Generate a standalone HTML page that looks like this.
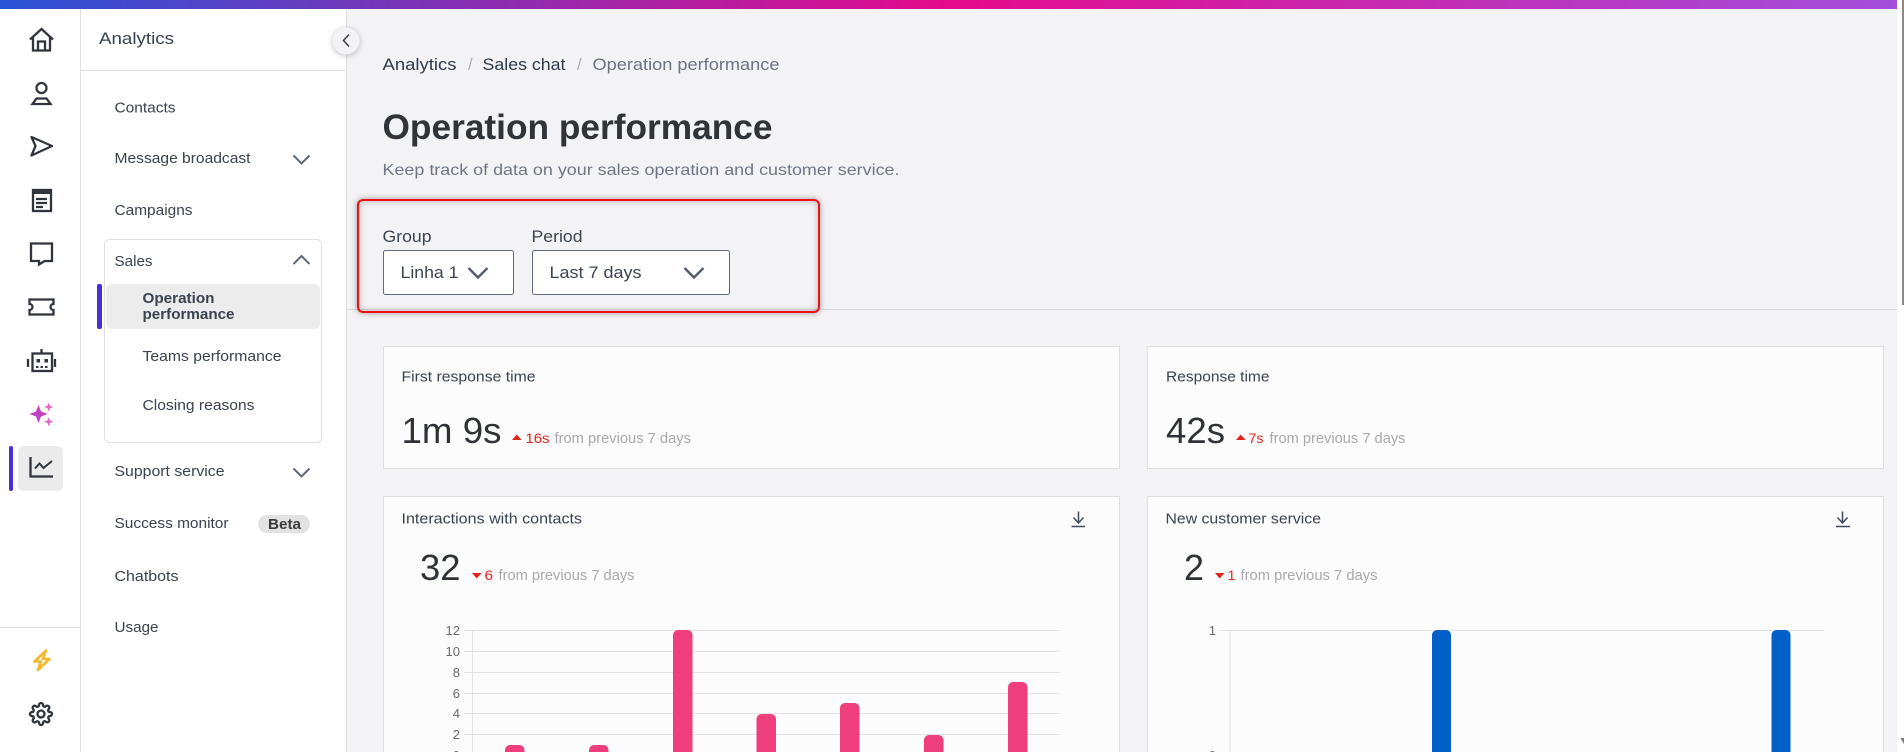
<!DOCTYPE html>
<html lang="en">
<head>
<meta charset="utf-8">
<title>Operation performance</title>
<style>
html,body{margin:0;padding:0;width:1904px;height:752px;overflow:hidden;background:#f3f3f5}
svg{position:absolute;left:0;top:0;display:block}
text{font-family:"Liberation Sans",sans-serif;fill:#3a4250}
.nav{font-size:15px}
.crumb{font-size:16.5px}
.title{font-size:15px;fill:#3a4250}
.big{font-size:36px;fill:#2f3236}
.delta{font-size:14px;fill:#e0241a}
.from{font-size:14.5px;fill:#a9a9a9}
.axis{font-size:13px;fill:#6b6b6b;text-anchor:end}
.ic{fill:none;stroke:#30343c;stroke-width:2.300}
.ch{fill:none;stroke:#5f6878;stroke-width:2}
#redbox{position:absolute;left:357px;top:199px;width:459px;height:110px;border:2px solid #f10f14;border-radius:6px;box-shadow:0 0 6px rgba(60,60,60,.5),inset 0 0 7px rgba(60,60,60,.35)}
</style>
</head>
<body>
<svg width="1904" height="752" viewBox="0 0 1904 752" xmlns="http://www.w3.org/2000/svg">
<defs>
<linearGradient id="g" x1="0" y1="0" x2="1897" y2="0" gradientUnits="userSpaceOnUse">
<stop offset="0" stop-color="#2953d8"/>
<stop offset=".5" stop-color="#e60a8c"/>
<stop offset="1" stop-color="#a14fdc"/>
</linearGradient>
</defs>

<!-- shell -->
<rect x="1897" y="0" width="7" height="752" fill="#fdfdfd"/>
<rect x="1902" y="0" width="2" height="305" fill="#8a8a8a"/>
<path d="M1900.500 738h3.500v6z" fill="#777"/>
<rect x="0" y="9" width="346" height="743" fill="#fff"/>
<rect x="80" y="9" width="1" height="743" fill="#dedfe3"/>
<rect x="346" y="9" width="1" height="743" fill="#dedfe3"/>
<rect x="81" y="70" width="265" height="1" fill="#dedfe3"/>
<rect x="0" y="627" width="80" height="1" fill="#dedfe3"/>
<rect x="347" y="309" width="1550" height="1" fill="#dcdcde"/>
<rect x="0" y="0" width="1897" height="9" fill="url(#g)"/>

<!-- rail icons -->
<g class="ic">
<path d="M30 39.500 41.500 29 53 39.500M33 37v13.500h17V37M38 50.500v-9h7v9"/>
<circle cx="41.500" cy="88" r="5"/>
<path d="M36.500 98.500h10l4 5.500h-18z"/>
<path d="M31.500 137 52 146 31.500 155.500 35.500 146z" stroke-linejoin="round"/>
<rect x="33" y="190" width="18" height="21"/>
<path d="M36 199h11M36 203h11M36 207h7"/>
<path d="M31 243.500H52V261H44.500L39 264.500V261H31z"/>
<path d="M29.500 299.500H53.500V304a3 3 0 0 0 0 6v4.500H29.500V310a3 3 0 0 0 0-6z"/>
<rect x="32.500" y="353.500" width="19.500" height="17.500"/>
<path d="M41.500 349v4.500M28 359v8M55 359v8"/>
<circle cx="41" cy="714" r="3.500"/>
<path transform="translate(29 702)" d="M19.400 15a1.650 1.650 0 0 0 .33 1.820l.06.06a2 2 0 0 1 0 2.830 2 2 0 0 1-2.830 0l-.06-.06a1.650 1.650 0 0 0-1.820-.33 1.650 1.650 0 0 0-1 1.510V21a2 2 0 0 1-2 2 2 2 0 0 1-2-2v-.09A1.650 1.650 0 0 0 9 19.400a1.650 1.650 0 0 0-1.820.33l-.06.06a2 2 0 0 1-2.830 0 2 2 0 0 1 0-2.830l.06-.06a1.650 1.650 0 0 0 .33-1.820 1.650 1.650 0 0 0-1.510-1H3a2 2 0 0 1-2-2 2 2 0 0 1 2-2h.09A1.650 1.650 0 0 0 4.600 9a1.650 1.650 0 0 0-.33-1.820l-.06-.06a2 2 0 0 1 0-2.830 2 2 0 0 1 2.830 0l.06.06a1.650 1.650 0 0 0 1.820.33H9a1.650 1.650 0 0 0 1-1.510V3a2 2 0 0 1 2-2 2 2 0 0 1 2 2v.09a1.650 1.650 0 0 0 1 1.510 1.650 1.650 0 0 0 1.820-.33l.06-.06a2 2 0 0 1 2.830 0 2 2 0 0 1 0 2.830l-.06.06a1.650 1.650 0 0 0-.33 1.820V9a1.650 1.650 0 0 0 1.510 1H21a2 2 0 0 1 2 2 2 2 0 0 1-2 2h-.09a1.650 1.650 0 0 0-1.510 1z"/>
</g>
<rect x="32" y="189" width="20" height="5" fill="#30343c"/>
<g fill="#30343c">
<rect x="36.500" y="359" width="3.500" height="3.500"/>
<rect x="44.500" y="359" width="3.500" height="3.500"/>
<rect x="36" y="366" width="2.500" height="2"/>
<rect x="40.500" y="366" width="2.500" height="2"/>
<rect x="45" y="366" width="2.500" height="2"/>
</g>
<path d="M38.500 405 41 411.500 47.500 414 41 416.500 38.500 423 36 416.500 29.500 414 36 411.500z" fill="#c23fc6"/>
<path d="M48.700 402.500 50 405.700 53.200 407 50 408.300 48.700 411.500 47.400 408.300 44.200 407 47.400 405.700z" fill="#e765bf"/>
<path d="M48.700 417.200 50 420.400 53.200 421.700 50 423 48.700 426.200 47.400 423 44.200 421.700 47.400 420.400z" fill="#e765bf"/>
<rect x="18" y="446" width="45" height="45" rx="6" fill="#ebebeb"/>
<path class="ic" d="M30.500 457v19.500H53"/>
<path class="ic" d="M35 468.500 39.500 463.500 43.500 468 52 461" style="stroke-width:2"/>
<rect x="9" y="446" width="4" height="45" rx="2" fill="#4a2de0"/>
<path d="M46 650.500 34.500 661.500H41L37.800 670 49.500 659H43z" fill="none" stroke="#f4b82e" stroke-width="2.600" stroke-linejoin="round"/>

<!-- sidebar -->
<text x="99" y="44" font-size="17" textLength="75" lengthAdjust="spacingAndGlyphs">Analytics</text>
<circle cx="346" cy="41" r="13.500" fill="#f3f3f5" style="filter:drop-shadow(0 1px 3px rgba(0,0,0,.25))"/>
<path d="M349 34.500 343.500 40.500 349 46.500" fill="none" stroke="#404652" stroke-width="1.600"/>

<text class="nav" x="114.500" y="112.500" textLength="61" lengthAdjust="spacingAndGlyphs">Contacts</text>
<text class="nav" x="114.500" y="163" textLength="136" lengthAdjust="spacingAndGlyphs">Message broadcast</text>
<path class="ch" d="M293.500 155.500 301.500 163.500 309.500 155.500"/>
<text class="nav" x="114.500" y="215" textLength="78" lengthAdjust="spacingAndGlyphs">Campaigns</text>

<rect x="104.500" y="239.500" width="217" height="203" rx="5" fill="#fff" stroke="#dfe0e4"/>
<text class="nav" x="114.500" y="266" textLength="38" lengthAdjust="spacingAndGlyphs">Sales</text>
<path class="ch" d="M293.500 264 301.500 256 309.500 264"/>
<rect x="106" y="284" width="214" height="45" rx="6" fill="#ececec"/>
<rect x="97" y="284" width="5" height="45" rx="2" fill="#4a2de0"/>
<text class="nav" x="142.500" y="303" font-weight="700" textLength="72" lengthAdjust="spacingAndGlyphs">Operation</text>
<text class="nav" x="142.500" y="319" font-weight="700" textLength="92" lengthAdjust="spacingAndGlyphs">performance</text>
<text class="nav" x="142.500" y="361" textLength="139" lengthAdjust="spacingAndGlyphs">Teams performance</text>
<text class="nav" x="142.500" y="410" textLength="112" lengthAdjust="spacingAndGlyphs">Closing reasons</text>

<text class="nav" x="114.500" y="476" textLength="110" lengthAdjust="spacingAndGlyphs">Support service</text>
<path class="ch" d="M293.500 468.500 301.500 476.500 309.500 468.500"/>
<text class="nav" x="114.500" y="528" textLength="114" lengthAdjust="spacingAndGlyphs">Success monitor</text>
<rect x="258" y="515" width="52" height="18" rx="9" fill="#e2e2e2"/>
<text x="268" y="529" font-size="15" font-weight="700" textLength="33" lengthAdjust="spacingAndGlyphs" style="fill:#3a3a3a">Beta</text>
<text class="nav" x="114.500" y="581" textLength="64" lengthAdjust="spacingAndGlyphs">Chatbots</text>
<text class="nav" x="114.500" y="632" textLength="44" lengthAdjust="spacingAndGlyphs">Usage</text>

<!-- header -->
<text class="crumb" x="382.500" y="70" textLength="74" lengthAdjust="spacingAndGlyphs" style="fill:#2f3a4a">Analytics</text>
<text class="crumb" x="468" y="70" style="fill:#a8adb8">/</text>
<text class="crumb" x="482.500" y="70" textLength="83" lengthAdjust="spacingAndGlyphs" style="fill:#2f3a4a">Sales chat</text>
<text class="crumb" x="577" y="70" style="fill:#a8adb8">/</text>
<text class="crumb" x="592.500" y="70" textLength="187" lengthAdjust="spacingAndGlyphs" style="fill:#6b7280">Operation performance</text>
<text x="382.500" y="139" font-size="35" font-weight="700" textLength="390" lengthAdjust="spacingAndGlyphs" style="fill:#303338">Operation performance</text>
<text x="382.500" y="175" font-size="16" textLength="517" lengthAdjust="spacingAndGlyphs" style="fill:#6f7683">Keep track of data on your sales operation and customer service.</text>

<!-- filters -->
<text x="382.500" y="242" font-size="17" textLength="49" lengthAdjust="spacingAndGlyphs" style="fill:#3d4450">Group</text>
<text x="531.500" y="242" font-size="17" textLength="51" lengthAdjust="spacingAndGlyphs" style="fill:#3d4450">Period</text>
<rect x="383.500" y="250.500" width="130" height="44" rx="2" fill="#fff" stroke="#5f6a80"/>
<rect x="532.500" y="250.500" width="197" height="44" rx="2" fill="#fff" stroke="#5f6a80"/>
<text x="400.500" y="278" font-size="17" textLength="58" lengthAdjust="spacingAndGlyphs" style="fill:#3d4450">Linha 1</text>
<text x="549.500" y="278" font-size="17" textLength="92" lengthAdjust="spacingAndGlyphs" style="fill:#3d4450">Last 7 days</text>
<path d="M468.500 268 478 277.500 487.500 268" fill="none" stroke="#525b6c" stroke-width="2.400"/>
<path d="M684.500 268 694 277.500 703.500 268" fill="none" stroke="#525b6c" stroke-width="2.400"/>

<!-- cards -->
<g fill="#fcfcfc" stroke="#dfdfe1">
<rect x="383.500" y="346.500" width="736" height="122"/>
<rect x="1147.500" y="346.500" width="736" height="122"/>
<path d="M383.500 752V496.500H1119.500V752"/>
<path d="M1147.500 752V496.500H1883.500V752"/>
</g>

<text class="title" x="401.500" y="381.500" textLength="134" lengthAdjust="spacingAndGlyphs">First response time</text>
<text class="big" x="401.500" y="443" textLength="100" lengthAdjust="spacingAndGlyphs">1m 9s</text>
<path d="M512 440h9.500l-4.750-5.500z" fill="#e0241a"/>
<text class="delta" x="525.500" y="443" textLength="24" lengthAdjust="spacingAndGlyphs">16s</text>
<text class="from" x="554.500" y="443" textLength="136.500" lengthAdjust="spacingAndGlyphs">from previous 7 days</text>

<text class="title" x="1166" y="381.500" textLength="103.500" lengthAdjust="spacingAndGlyphs">Response time</text>
<text class="big" x="1166" y="443" textLength="59" lengthAdjust="spacingAndGlyphs">42s</text>
<path d="M1236 440h9.500l-4.750-5.500z" fill="#e0241a"/>
<text class="delta" x="1248.500" y="443" textLength="15" lengthAdjust="spacingAndGlyphs">7s</text>
<text class="from" x="1269.500" y="443" textLength="136" lengthAdjust="spacingAndGlyphs">from previous 7 days</text>

<!-- Interactions -->
<text class="title" x="401.500" y="523.500" textLength="180.500" lengthAdjust="spacingAndGlyphs">Interactions with contacts</text>
<path d="M1078.500 511.500v11M1073.500 517.500l5 5.500 5-5.500M1071.500 526.500H1085" fill="none" stroke="#3f4a5c" stroke-width="1.500"/>
<text class="big" x="420" y="580" textLength="40.500" lengthAdjust="spacingAndGlyphs">32</text>
<path d="M472 573h9.500l-4.750 5.500z" fill="#e0241a"/>
<text class="delta" x="484.500" y="580" textLength="8.500" lengthAdjust="spacingAndGlyphs">6</text>
<text class="from" x="498.500" y="580" textLength="136" lengthAdjust="spacingAndGlyphs">from previous 7 days</text>

<g fill="#e2e2e2">
<rect x="464" y="630" width="595.500" height="1"/>
<rect x="464" y="651" width="595.500" height="1"/>
<rect x="464" y="672" width="595.500" height="1"/>
<rect x="464" y="693" width="595.500" height="1"/>
<rect x="464" y="713" width="595.500" height="1"/>
<rect x="464" y="734" width="595.500" height="1"/>
<rect x="472" y="630" width="1" height="122"/>
</g>
<text class="axis" x="460" y="635">12</text>
<text class="axis" x="460" y="656">10</text>
<text class="axis" x="460" y="677">8</text>
<text class="axis" x="460" y="698">6</text>
<text class="axis" x="460" y="718">4</text>
<text class="axis" x="460" y="739">2</text>
<text class="axis" x="460" y="760">0</text>
<g fill="#ee3e7b">
<path d="M505 752v-2a5 5 0 0 1 5-5h9.500a5 5 0 0 1 5 5v2z"/>
<path d="M589 752v-2a5 5 0 0 1 5-5h9.500a5 5 0 0 1 5 5v2z"/>
<path d="M673 752V635a5 5 0 0 1 5-5h9.500a5 5 0 0 1 5 5V752z"/>
<path d="M756.500 752V719a5 5 0 0 1 5-5h9.500a5 5 0 0 1 5 5V752z"/>
<path d="M840 752V708a5 5 0 0 1 5-5h9.500a5 5 0 0 1 5 5V752z"/>
<path d="M924 752V740a5 5 0 0 1 5-5h9.500a5 5 0 0 1 5 5V752z"/>
<path d="M1008 752V687a5 5 0 0 1 5-5h9.500a5 5 0 0 1 5 5V752z"/>
</g>

<!-- New customer service -->
<text class="title" x="1165.500" y="523.500" textLength="155.500" lengthAdjust="spacingAndGlyphs">New customer service</text>
<path d="M1842.500 511.500v11M1837.500 517.500l5 5.500 5-5.500M1836 526.500H1850" fill="none" stroke="#3f4a5c" stroke-width="1.500"/>
<text class="big" x="1184" y="580" textLength="20" lengthAdjust="spacingAndGlyphs">2</text>
<path d="M1215 573h9.500l-4.750 5.500z" fill="#e0241a"/>
<text class="delta" x="1227.500" y="580" textLength="8" lengthAdjust="spacingAndGlyphs">1</text>
<text class="from" x="1240.500" y="580" textLength="137" lengthAdjust="spacingAndGlyphs">from previous 7 days</text>
<rect x="1220" y="630" width="603.500" height="1" fill="#e2e2e2"/>
<rect x="1229.500" y="630" width="1" height="122" fill="#e2e2e2"/>
<text class="axis" x="1216" y="635">1</text>
<text class="axis" x="1216" y="760">0</text>
<path d="M1432 752V635a5 5 0 0 1 5-5h9a5 5 0 0 1 5 5V752z" fill="#0060c8"/>
<path d="M1771.500 752V635a5 5 0 0 1 5-5h9a5 5 0 0 1 5 5V752z" fill="#0060c8"/>
</svg>
<div id="redbox"></div>
</body>
</html>
